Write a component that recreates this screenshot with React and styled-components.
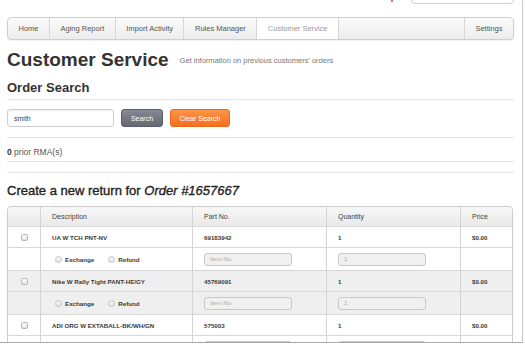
import React from "react";
import styled, { createGlobalStyle } from "styled-components";

const GlobalStyle = createGlobalStyle`
  html, body {
    margin: 0;
    padding: 0;
    background: #ffffff;
  }
  body {
    font-family: "Liberation Sans", Arial, sans-serif;
    color: #333;
  }
`;

const Frame = styled.div`
  box-sizing: border-box;
  width: 523px;
  height: 343px;
  border-right: 1px solid #c9c9c9;
  border-bottom: 1px solid #a9a9a9;
  box-shadow: 0 1px 1px rgba(0, 0, 0, 0.12);
  padding: 0 8px 0 7px;
  overflow: hidden;
`;

const TopBar = styled.div`
  height: 17px;
  display: flex;
  justify-content: flex-end;
  align-items: flex-start;
  gap: 18px;
  overflow: hidden;
`;

const Flag = styled.span`
  width: 2px;
  height: 2px;
  background: #e07070;
`;

const TopSearch = styled.div`
  box-sizing: border-box;
  width: 103px;
  height: 18px;
  margin-top: -14px;
  border: 1px solid #d0d0d0;
  border-radius: 4px;
  background: #fff;
`;

const Nav = styled.nav`
  box-sizing: border-box;
  display: flex;
  height: 23px;
  border: 1px solid #cfcfcf;
  border-radius: 4px;
  background: linear-gradient(#fbfbfb, #ececec);
  box-shadow: 0 1px 1px rgba(0, 0, 0, 0.06);
  overflow: hidden;
`;

const Tab = styled.div`
  display: flex;
  align-items: center;
  padding: 0 10.5px;
  font-size: 7.5px;
  color: ${(p) => (p.$active ? "#9a9a9a" : "#555")};
  background: ${(p) => (p.$active ? "#ffffff" : "transparent")};
  border-right: ${(p) => (p.$last ? "none" : "1px solid #d6d6d6")};
  border-left: ${(p) => (p.$last ? "1px solid #d6d6d6" : "none")};
`;

const NavSpacer = styled.div`
  flex: 1;
`;

const PageHead = styled.div`
  display: flex;
  align-items: baseline;
  gap: 11px;
  margin-top: 9px;
`;

const Title = styled.h1`
  margin: 0;
  font-size: 19px;
  line-height: 22px;
  font-weight: bold;
  color: #333;
`;

const Lead = styled.span`
  font-size: 7.5px;
  color: #777;
  position: relative;
  top: -3px;
`;

const SectionTitle = styled.h2`
  margin: 9px 0 0;
  padding-bottom: 3px;
  border-bottom: 1px solid #e6e6e6;
  font-size: 13px;
  line-height: 16px;
  font-weight: bold;
  color: #333;
`;

const SearchRow = styled.div`
  display: flex;
  align-items: center;
  gap: 7px;
  padding: 9px 0 10px;
  border-bottom: 1px solid #e6e6e6;
`;

const TextInput = styled.div`
  box-sizing: border-box;
  width: 107px;
  height: 18px;
  display: flex;
  align-items: center;
  padding-left: 6px;
  border: 1px solid #cfcfcf;
  border-radius: 3px;
  box-shadow: inset 0 1px 1px rgba(0, 0, 0, 0.08);
  font-size: 7px;
  color: #444;
`;

const Button = styled.div`
  box-sizing: border-box;
  height: 18px;
  width: ${(p) => p.$w}px;
  display: flex;
  align-items: center;
  justify-content: center;
  border-radius: 3px;
  font-size: 7px;
  color: #fff;
  border: 1px solid ${(p) => (p.$orange ? "#e8691c" : "#5b5f69")};
  background: ${(p) =>
    p.$orange
      ? "linear-gradient(#fb9546, #f3701f)"
      : "linear-gradient(#858a96, #646874)"};
`;

const Count = styled.div`
  padding: 8px 0 3px;
  line-height: 12px;
  font-size: 8.5px;
  color: #555;
  border-bottom: 1px solid #e6e6e6;

  b {
    color: #333;
  }
`;

const Divider = styled.div`
  height: 10px;
  border-bottom: 1px solid #e6e6e6;
`;

const ReturnTitle = styled.h3`
  margin: 10px 0 7px;
  font-size: 13px;
  line-height: 16px;
  font-weight: normal;
  color: #222;
  -webkit-text-stroke: 0.35px #222;

  em {
    font-style: italic;
  }
`;

const Table = styled.table`
  width: 506px;
  border-collapse: separate;
  border-spacing: 0;
  border: 1px solid #cccccc;
  border-radius: 4px;
  table-layout: fixed;
`;

const Th = styled.th`
  height: 19px;
  padding: 0 0 0 11px;
  text-align: left;
  font-size: 7px;
  font-weight: normal;
  color: #444;
  background: linear-gradient(#f7f7f7, #e9e9e9);
  border-left: ${(p) => (p.$first ? "none" : "1px solid #d4d4d4")};
  &:first-child {
    border-top-left-radius: 4px;
  }
  &:last-child {
    border-top-right-radius: 4px;
  }
`;

const Tr = styled.tr`
  background: ${(p) => (p.$shade ? "#efefef" : "#ffffff")};
`;

const Td = styled.td`
  box-sizing: border-box;
  height: ${(p) => (p.$sub ? 23 : 21)}px;
  padding: 0 0 0 11px;
  border-top: 1px solid #d8d8d8;
  border-left: ${(p) => (p.$first ? "none" : "1px solid #d4d4d4")};
  font-size: 6.2px;
  font-weight: bold;
  color: #3a3a3a;
  text-align: ${(p) => (p.$center ? "center" : "left")};
  ${(p) => (p.$center ? "padding: 0;" : "")}
  vertical-align: middle;
`;

const Check = styled.span`
  display: inline-block;
  box-sizing: border-box;
  width: 7px;
  height: 7px;
  border: 1px solid #b9b9b9;
  border-radius: 2px;
  background: linear-gradient(#fdfdfd, #e4e4e4);
  vertical-align: middle;
`;

const Choices = styled.div`
  display: flex;
  align-items: center;
  gap: 14px;
  padding-left: 3px;
`;

const Choice = styled.label`
  display: flex;
  align-items: center;
  gap: 3px;
`;

const Radio = styled.span`
  box-sizing: border-box;
  width: 7px;
  height: 7px;
  border: 1px solid #c4c4c4;
  border-radius: 50%;
  background: linear-gradient(#f6f6f6, #e2e2e2);
`;

const CellInput = styled.div`
  box-sizing: border-box;
  width: 88px;
  height: 13px;
  display: flex;
  align-items: center;
  padding-left: 5px;
  border: 1px solid #c8c8c8;
  border-radius: 3px;
  background: #f0f0f0;
  font-size: 6px;
  font-weight: normal;
  color: #aaa;
`;

const items = [
  { desc: "UA W TCH PNT-NV", part: "69183942", qty: "1", price: "$0.00" },
  { desc: "Nike W Rally Tight PANT-HE/GY", part: "45769091", qty: "1", price: "$0.00" },
  { desc: "ADI ORG W EXTABALL-BK/WH/GN", part: "575003", qty: "1", price: "$0.00" },
];

const tabs = ["Home", "Aging Report", "Import Activity", "Rules Manager", "Customer Service"];

export default function App() {
  return (
    <>
      <GlobalStyle />
      <Frame>
        <TopBar>
          <Flag />
          <TopSearch />
        </TopBar>
        <Nav>
          {tabs.map((t) => (
            <Tab key={t} $active={t === "Customer Service"}>
              {t}
            </Tab>
          ))}
          <NavSpacer />
          <Tab $last>Settings</Tab>
        </Nav>

        <PageHead>
          <Title>Customer Service</Title>
          <Lead>Get information on previous customers' orders</Lead>
        </PageHead>

        <SectionTitle>Order Search</SectionTitle>
        <SearchRow>
          <TextInput>smith</TextInput>
          <Button $w={42}>Search</Button>
          <Button $w={60} $orange>
            Clear Search
          </Button>
        </SearchRow>

        <Count>
          <b>0</b> prior RMA(s)
        </Count>
        <Divider />

        <ReturnTitle>
          Create a new return for <em>Order #1657667</em>
        </ReturnTitle>

        <Table>
          <colgroup>
            <col style={{ width: 32 }} />
            <col style={{ width: 152 }} />
            <col style={{ width: 134 }} />
            <col style={{ width: 134 }} />
            <col />
          </colgroup>
          <thead>
            <tr>
              <Th $first />
              <Th>Description</Th>
              <Th>Part No.</Th>
              <Th>Quantity</Th>
              <Th>Price</Th>
            </tr>
          </thead>
          <tbody>
            {items.map((it, i) => (
              <React.Fragment key={it.part}>
                <Tr $shade={i === 1}>
                  <Td $first $center>
                    <Check />
                  </Td>
                  <Td>{it.desc}</Td>
                  <Td>{it.part}</Td>
                  <Td>{it.qty}</Td>
                  <Td>{it.price}</Td>
                </Tr>
                <Tr $shade={i === 1}>
                  <Td $first $sub />
                  <Td $sub>
                    <Choices>
                      <Choice>
                        <Radio />
                        Exchange
                      </Choice>
                      <Choice>
                        <Radio />
                        Refund
                      </Choice>
                    </Choices>
                  </Td>
                  <Td $sub>
                    <CellInput>Item No.</CellInput>
                  </Td>
                  <Td $sub>
                    <CellInput>1</CellInput>
                  </Td>
                  <Td $sub />
                </Tr>
              </React.Fragment>
            ))}
          </tbody>
        </Table>
      </Frame>
    </>
  );
}
